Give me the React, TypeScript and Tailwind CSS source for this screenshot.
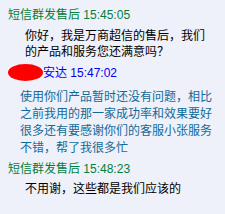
import React from "react";

const font = { fontFamily: '"Liberation Sans","Noto Sans CJK SC",sans-serif' };

export default function App() {
  return (
    <div
      className="w-[225px] h-[214px] bg-[#eef0fa] overflow-hidden pt-[7px] text-[12px] leading-[16px] flex flex-col"
      style={font}
    >
      <div className="pl-[8px] text-[#00803c] whitespace-nowrap">
        短信群发售后 <span>15:45:05</span>
      </div>
      <div className="mt-[5px] pl-[25px] text-[#000000] leading-[16px]">
        <div className="whitespace-nowrap">你好，我是万商超信的售后，我们</div>
        <div className="whitespace-nowrap">的产品和服务您还满意吗？</div>
      </div>
      <div className="mt-[4px] pl-[8px] text-[#0000ee] whitespace-nowrap flex items-center h-[17px]">
        <span className="inline-block w-[35px] h-[17px] bg-[#ff0000] rounded-[50%] blur-[0.5px]" />
        <span>安达 15:47:02</span>
      </div>
      <div className="mt-[8px] pl-[20px] text-[#126a98] leading-[17px]">
        <div className="whitespace-nowrap">使用你们产品暂时还没有问题，相比</div>
        <div className="whitespace-nowrap">之前我用的那一家成功率和效果要好</div>
        <div className="whitespace-nowrap">很多还有要感谢你们的客服小张服务</div>
        <div className="whitespace-nowrap">不错，帮了我很多忙</div>
      </div>
      <div className="mt-[4px] pl-[8px] text-[#00803c] whitespace-nowrap">
        短信群发售后 <span>15:48:23</span>
      </div>
      <div className="mt-[4px] pl-[25px] text-[#000000] whitespace-nowrap">
        不用谢，这些都是我们应该的
      </div>
    </div>
  );
}
